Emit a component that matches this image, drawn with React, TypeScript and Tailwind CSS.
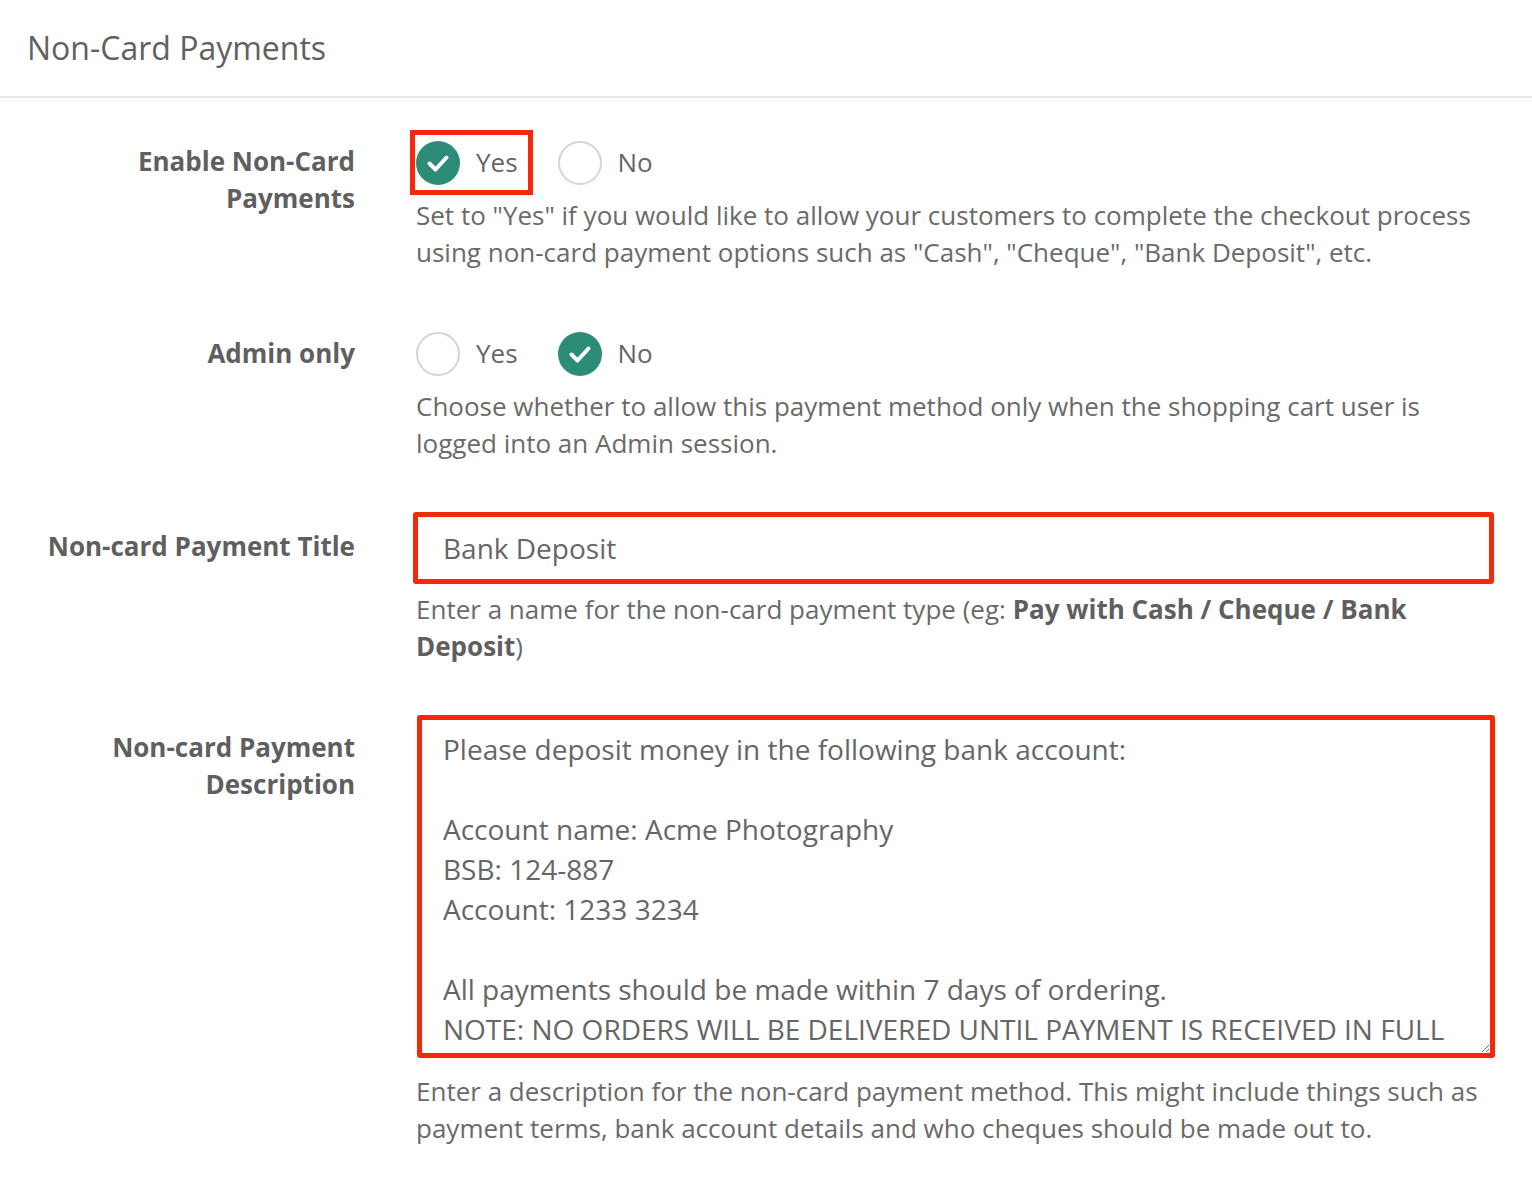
import { useState } from "react";

const RED = "border-[#f4290b]";

const Check = () => (
  <svg viewBox="0 0 44 44" className="h-[44px] w-[44px]">
    <circle cx="22" cy="22" r="22" fill="#2d8c77" />
    <path d="M13.5 22.5l6 6 11-12" fill="none" stroke="#fff" strokeWidth="4" strokeLinecap="round" strokeLinejoin="round" />
  </svg>
);

const Empty = () => (
  <span className="block h-[44px] w-[44px] rounded-full border-2 border-[#d6d3d0] bg-white" />
);

const Radio = ({ label, checked, marked, onClick }: { label: string; checked: boolean; marked?: boolean; onClick: () => void }) => (
  <button type="button" onClick={onClick} className="relative flex items-center gap-[16px] text-[26px] leading-[37px] text-[#666]">
    {checked ? <Check /> : <Empty />}
    <span className="-mt-[1px]">{label}</span>
    {marked && <span className={`pointer-events-none absolute -left-[6px] -right-[15px] -top-[11px] -bottom-[10px] border-[5px] ${RED}`} />}
  </button>
);

const Row = ({ label, labelPad, children, className }: { label: React.ReactNode; labelPad: string; children: React.ReactNode; className?: string }) => (
  <div className={`grid grid-cols-[355px_1078px] gap-x-[61px] ${className ?? ""}`}>
    <div className={`text-right text-[26px] font-bold leading-[37px] text-[#5f5f5f] ${labelPad}`}>{label}</div>
    <div>{children}</div>
  </div>
);

const Help = ({ children, className }: { children: React.ReactNode; className?: string }) => (
  <p className={`text-[26px] leading-[37px] text-[#6a6a6a] ${className ?? ""}`}>{children}</p>
);

export default function App() {
  const [enabled, setEnabled] = useState(true);
  const [adminOnly, setAdminOnly] = useState(false);
  const [title, setTitle] = useState("Bank Deposit");
  const [desc, setDesc] = useState(
    "Please deposit money in the following bank account:\n\nAccount name: Acme Photography\nBSB: 124-887\nAccount: 1233 3234\n\nAll payments should be made within 7 days of ordering.\nNOTE: NO ORDERS WILL BE DELIVERED UNTIL PAYMENT IS RECEIVED IN FULL"
  );

  return (
    <div className="min-h-screen bg-white font-['Open_Sans',sans-serif] text-[#666]">
      {/* Header */}
      <header className="flex h-[98px] items-center border-b-2 border-[#e6e9e9] pl-[27px]">
        <h1 className="-mt-[1px] text-[32px] text-[#616161]">Non-Card Payments</h1>
      </header>

      <div className="pt-[43px]">
        {/* Enable */}
        <Row label={<>Enable Non-Card<br />Payments</>} labelPad="pt-[2px]">
          <div className="flex h-[44px] items-center gap-[40px]">
            <Radio label="Yes" checked={enabled} marked onClick={() => setEnabled(true)} />
            <Radio label="No" checked={!enabled} onClick={() => setEnabled(false)} />
          </div>
          <Help className="mt-[12px]">
            Set to "Yes" if you would like to allow your customers to complete the checkout process using non-card payment options such as "Cash", "Cheque", "Bank Deposit", etc.
          </Help>
        </Row>

        {/* Admin only */}
        <Row label="Admin only" labelPad="pt-[3px]" className="mt-[61px]">
          <div className="flex h-[44px] items-center gap-[40px]">
            <Radio label="Yes" checked={adminOnly} onClick={() => setAdminOnly(true)} />
            <Radio label="No" checked={!adminOnly} onClick={() => setAdminOnly(false)} />
          </div>
          <Help className="mt-[12px]">
            Choose whether to allow this payment method only when the shopping cart user is logged into an Admin session.
          </Help>
        </Row>

        {/* Title */}
        <Row label="Non-card Payment Title" labelPad="pt-[16px]" className="mt-[50px]">
          <input
            value={title}
            onChange={(e) => setTitle(e.target.value)}
            className={`-ml-[3px] block h-[72px] w-[1081px] rounded-[3px] border-[5px] ${RED} bg-white pl-[25px] text-[28px] text-[#666] outline-none`}
          />
          <Help className="mt-[7px]">
            Enter a name for the non-card payment type (eg: <b className="text-[#5f5f5f]">Pay with Cash / Cheque / Bank Deposit</b>)
          </Help>
        </Row>

        {/* Description */}
        <Row label={<>Non-card Payment<br />Description</>} labelPad="pt-[14px]" className="mt-[50px]">
          <textarea
            value={desc}
            onChange={(e) => setDesc(e.target.value)}
            className={`ml-[1px] block h-[343px] w-[1078px] resize-y overflow-hidden rounded-[3px] border-[5px] ${RED} bg-white pl-[21px] pr-[10px] pt-[9px] text-[28px] leading-[40px] text-[#666] outline-none`}
          />
          <Help className="mt-[15px]">
            Enter a description for the non-card payment method. This might include things such as payment terms, bank account details and who cheques should be made out to.
          </Help>
        </Row>
      </div>
    </div>
  );
}
